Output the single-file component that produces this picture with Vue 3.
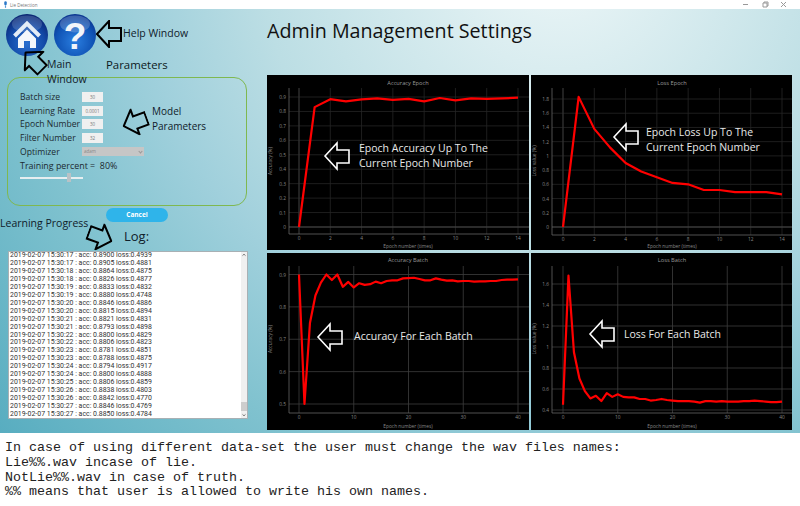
<template>
  <div class="app">
    <div class="titlebar">
      <svg class="app-icon" viewBox="0 0 6 8"><rect x="1.5" y="0" width="3" height="5" rx="1.5" fill="#2a78c8" /><rect x="2.3" y="5" width="1.4" height="3" fill="#5a9ad8" /></svg>
      <span class="app-name">Lie Detection</span>
      <div class="win-controls">
        <svg viewBox="0 0 50 9" width="50" height="9">
          <path d="M0 4.5h5" stroke="#999" fill="none" />
          <path d="M20 3h4v4h-4zM21 3V2h4v4h-1" stroke="#999" fill="none" />
          <path d="M38 2l5 5M43 2l-5 5" stroke="#999" fill="none" />
        </svg>
      </div>
    </div>

    <div class="main">
      <div class="left">
        <div class="top-icons">
          <svg class="orb" viewBox="0 0 42 42">
            <defs>
              <radialGradient id="homeOrb" cx="50%" cy="70%" r="70%">
                <stop offset="0" stop-color="#2a70d0" />
                <stop offset="0.6" stop-color="#124aa8" />
                <stop offset="1" stop-color="#0a2470" />
              </radialGradient>
            </defs>
            <circle cx="21" cy="21" r="21" fill="url(#homeOrb)" />
            <ellipse cx="21" cy="10" rx="15" ry="8.5" fill="#fff" opacity="0.16" />
            <path d="M8.5 22 21 9.5 33.5 22" fill="none" stroke="#e4ecf6" stroke-width="4" />
            <path d="M12 24.5 21 15.5 30 24.5V34H24V27H18V34H12Z" fill="#f4f7fb" />
          </svg>
          <svg class="orb" viewBox="0 0 42 42">
            <defs>
              <radialGradient id="helpOrb" cx="50%" cy="65%" r="70%">
                <stop offset="0" stop-color="#2a7ee0" />
                <stop offset="0.65" stop-color="#0f52b4" />
                <stop offset="1" stop-color="#0a2c84" />
              </radialGradient>
            </defs>
            <circle cx="21" cy="21" r="21" fill="url(#helpOrb)" />
            <ellipse cx="21" cy="10" rx="15" ry="8.5" fill="#fff" opacity="0.2" />
            <text x="21" y="35" class="orb-mark">?</text>
          </svg>
        </div>

        <div class="params-title">Parameters</div>

        <div class="params-panel">
          <div v-for="f in fields" :key="f.label" class="field">
            <span class="field-label">{{ f.label }}</span>
            <span class="field-input">{{ f.value }}</span>
          </div>
          <div class="field">
            <span class="field-label">Optimizer</span>
            <span class="field-select">adam<i class="caret"></i></span>
          </div>
          <div class="field">
            <span class="field-label wide">Training percent =&nbsp; 80%</span>
          </div>
          <div class="slider"><span class="slider-handle"></span></div>
        </div>

        <button class="cancel">Cancel</button>
        <div class="log-title">Log:</div>

        <div class="log-box">
          <div class="log-lines">
            <div v-for="(row, i) in logRows" :key="i" class="log-line">2019-02-07 15:30:{{ row[0] }} : acc: 0.{{ row[1] }} loss:0.{{ row[2] }}</div>
          </div>
          <div class="log-scroll">
            <svg viewBox="0 0 6 6" width="6" height="6"><path d="M1.5 3.6 3 2.2 4.5 3.6" fill="none" stroke="#777" /></svg>
            <div class="log-scroll-track"><span class="log-thumb"></span></div>
            <svg viewBox="0 0 6 6" width="6" height="6"><path d="M1.5 2.4 3 3.8 4.5 2.4" fill="none" stroke="#777" /></svg>
          </div>
        </div>

        <!-- hand drawn notes lying over the form -->
        <span class="note help-note">Help Window</span>
        <span class="note main-note">Main<br />Window</span>
        <span class="note model-note">Model<br />Parameters</span>
        <span class="note progress-note">Learning Progress</span>
        <svg
          v-for="a in blackArrows"
          :key="a.name"
          class="note-arrow"
          viewBox="0 0 26 28"
          :style="{ left: a.x + 'px', top: a.y + 'px', transform: 'rotate(' + a.r + 'deg)' }"
        >
          <polygon :points="arrowPoints" fill="none" stroke="#000" stroke-width="2" />
        </svg>
      </div>

      <div class="right">
        <h1 class="page-title">Admin Management Settings</h1>
        <div class="charts">
          <svg v-for="c in charts" :key="c.title" class="chart" :viewBox="'0 0 ' + c.w + ' ' + c.h" :style="{ height: c.h + 'px' }">
            <line v-for="t in c.xt" :key="'gx' + t.v" :x1="t.px" :x2="t.px" :y1="c.top" :y2="c.axisY" :stroke="c.grid" stroke-width="0.8" />
            <line v-for="t in c.yt" :key="'gy' + t.v" :x1="c.axisX" :x2="c.w" :y1="t.py" :y2="t.py" :stroke="c.grid" stroke-width="0.8" />
            <line v-if="c.zero" :x1="c.axisX" :x2="c.w" :y1="c.yt[0].py" :y2="c.yt[0].py" stroke="#555" stroke-width="0.8" />
            <line v-if="c.zero" :x1="c.xt[0].px" :x2="c.xt[0].px" :y1="c.top" :y2="c.axisY" stroke="#3c3c3c" stroke-width="0.8" />
            <line :x1="c.axisX" :x2="c.axisX" :y1="c.top" :y2="c.axisY" stroke="#666" stroke-width="0.8" />
            <line :x1="c.axisX" :x2="c.w" :y1="c.axisY" :y2="c.axisY" stroke="#666" stroke-width="0.8" />

            <text :x="c.titleX" :y="c.titleY" class="chart-title">{{ c.title }}</text>
            <text v-for="t in c.xt" :key="'tx' + t.v" :x="t.px" :y="c.axisY + 6" class="tick tick-x">{{ t.v }}</text>
            <text v-for="t in c.yt" :key="'ty' + t.v" :x="c.axisX - 3" :y="t.py + 2" class="tick tick-y">{{ t.v }}</text>
            <text :x="c.titleX" :y="c.h - 2" class="axis-label">Epoch number (times)</text>
            <text :transform="'translate(4.5 ' + c.labelY + ') rotate(-90)'" class="axis-label">{{ c.yLabel }}</text>

            <polyline :points="c.line" class="curve" />

            <polygon :points="arrowPoints" class="chart-arrow" :transform="'translate(' + c.arrow[0] + ' ' + c.arrow[1] + ')'" />
            <text v-for="(n, i) in c.note" :key="n" :x="c.noteX" :y="c.noteY + i * 15" class="chart-note">{{ n }}</text>
          </svg>
        </div>
      </div>
    </div>

    <div class="notes">
      <div>In case of using different data-set the user must change the wav files names:</div>
      <div>Lie%%.wav incase of lie.</div>
      <div>NotLie%%.wav in case of truth.</div>
      <div>%% means that user is allowed to write his own names.</div>
    </div>
  </div>
</template>

<script setup>
const fields = [
  { label: 'Batch size', value: '30' },
  { label: 'Learning Rate', value: '0.0001' },
  { label: 'Epoch Number', value: '30' },
  { label: 'Filter Number', value: '32' }
]

const logRows = [
  ['17', '8900', '4939'], ['17', '8905', '4881'], ['18', '8864', '4875'],
  ['18', '8826', '4877'], ['19', '8833', '4832'], ['19', '8880', '4748'],
  ['20', '8846', '4886'], ['20', '8815', '4894'], ['21', '8821', '4831'],
  ['21', '8793', '4898'], ['22', '8800', '4829'], ['22', '8806', '4823'],
  ['23', '8781', '4851'], ['23', '8788', '4875'], ['24', '8794', '4917'],
  ['24', '8800', '4888'], ['25', '8806', '4859'], ['26', '8838', '4803'],
  ['26', '8842', '4770'], ['27', '8846', '4769'], ['27', '8850', '4784']
]

const arrowPoints = '1,14 13,1 13,8 25,8 25,21 13,21 13,27'

// left/top are relative to the left column, which starts under the title bar
const blackArrows = [
  { name: 'help', x: 96, y: 11, r: 0 },
  { name: 'main', x: 21, y: 38, r: 45 },
  { name: 'model', x: 122, y: 99, r: -20 },
  { name: 'progress', x: 87, y: 214, r: 200 }
]

function buildChart(o) {
  const xPx = v => o.x0 + (v / o.xMax) * (o.x1 - o.x0)
  const yPx = v => o.y0 + ((v - o.yMin) / (o.yTop - o.yMin)) * (o.y1 - o.y0)
  const xt = []
  for (let v = 0; v <= o.xMax; v += o.xStep) xt.push({ v, px: xPx(v) })
  const yt = o.yTicks.map(v => ({ v, py: yPx(v) }))
  return {
    ...o,
    xt,
    yt,
    line: o.data.map((v, i) => xPx(i) + ',' + yPx(v)).join(' ')
  }
}

const charts = [
  buildChart({
    title: 'Accuracy Epoch', yLabel: 'Accuracy (%)', w: 262, h: 175, titleX: 141, titleY: 10, labelY: 86,
    x0: 32, x1: 251, xMax: 14, xStep: 2, y0: 152, y1: 22, yMin: 0, yTop: 0.9,
    yTicks: [0, 0.1, 0.2, 0.3, 0.4, 0.5, 0.6, 0.7, 0.8, 0.9],
    axisX: 22, axisY: 159, top: 13, grid: '#262626', zero: true,
    data: [0, 0.83, 0.885, 0.87, 0.883, 0.89, 0.88, 0.887, 0.87, 0.893, 0.877, 0.89, 0.887, 0.89, 0.895],
    arrow: [57, 67], note: ['Epoch Accuracy Up To The', 'Current Epoch Number'], noteX: 92, noteY: 77
  }),
  buildChart({
    title: 'Loss Epoch', yLabel: 'Loss value (%)', w: 261, h: 175, titleX: 141, titleY: 10, labelY: 86,
    x0: 32, x1: 251, xMax: 14, xStep: 2, y0: 152, y1: 24, yMin: 0, yTop: 1.8,
    yTicks: [0, 0.2, 0.4, 0.6, 0.8, 1, 1.2, 1.4, 1.6, 1.8],
    axisX: 21, axisY: 160, top: 13, grid: '#262626', zero: true,
    data: [0, 1.83, 1.38, 1.12, 0.9, 0.78, 0.7, 0.62, 0.6, 0.52, 0.52, 0.49, 0.49, 0.49, 0.46],
    arrow: [82, 48], note: ['Epoch Loss Up To The', 'Current Epoch Number'], noteX: 115, noteY: 61
  }),
  buildChart({
    title: 'Accuracy Batch', yLabel: 'Accuracy (%)', w: 262, h: 177, titleX: 141, titleY: 9, labelY: 86,
    x0: 32, x1: 251, xMax: 40, xStep: 10, y0: 151, y1: 21.5, yMin: 0.5, yTop: 0.9,
    yTicks: [0.5, 0.6, 0.7, 0.8, 0.9],
    axisX: 22, axisY: 160, top: 13, grid: '#3e3e3e', zero: false,
    data: [0.9, 0.5, 0.75, 0.835, 0.875, 0.9, 0.883, 0.9, 0.862, 0.877, 0.86, 0.873, 0.868, 0.87, 0.878, 0.873, 0.88, 0.882, 0.882, 0.888, 0.889, 0.89, 0.886, 0.882, 0.882, 0.888, 0.884, 0.881, 0.882, 0.879, 0.88, 0.88, 0.878, 0.879, 0.879, 0.88, 0.88, 0.883, 0.884, 0.884, 0.885],
    arrow: [50, 70], note: ['Accuracy For Each Batch'], noteX: 87, noteY: 87
  }),
  buildChart({
    title: 'Loss Batch', yLabel: 'Loss value (%)', w: 261, h: 177, titleX: 141, titleY: 9, labelY: 86,
    x0: 32, x1: 251, xMax: 40, xStep: 10, y0: 157, y1: 31, yMin: 0.4, yTop: 1.6,
    yTicks: [0.4, 0.6, 0.8, 1, 1.2, 1.4, 1.6],
    axisX: 21, axisY: 160, top: 13, grid: '#3e3e3e', zero: false,
    data: [0.45, 1.68, 0.95, 0.7, 0.58, 0.51, 0.535, 0.485, 0.56, 0.525, 0.55, 0.525, 0.52, 0.52, 0.505, 0.505, 0.49, 0.495, 0.505, 0.495, 0.49, 0.485, 0.485, 0.485, 0.48, 0.47, 0.485, 0.485, 0.48, 0.485, 0.48, 0.48, 0.48, 0.485, 0.485, 0.49, 0.485, 0.48, 0.475, 0.475, 0.48],
    arrow: [58, 67], note: ['Loss For Each Batch'], noteX: 93, noteY: 85
  })
]
</script>

<style scoped>
.app {
  width: 800px;
  height: 506px;
  overflow: hidden;
  display: flex;
  flex-direction: column;
  background: #fff;
  font-family: "Open Sans", "Noto Sans", sans-serif;
  color: #1c2a30;
}

.titlebar {
  height: 9px;
  flex: none;
  display: flex;
  align-items: center;
  padding-left: 3px;
  background: #fff;
}

.app-icon {
  width: 5px;
  height: 7px;
}

.app-name {
  margin-left: 2px;
  font-size: 4.5px;
  color: #777;
}

.win-controls {
  margin-left: auto;
  margin-right: 7px;
  display: flex;
}

.main {
  position: relative;
  height: 424px;
  flex: none;
  display: flex;
  background: radial-gradient(circle 800px at 560px -60px, #eaf5f6 0, #e4f2f4 60px, #c6e3e8 240px, #bcdee4 300px, #a0d0dc 420px, #80c2cf 550px, #58adc0 740px);
}

.left {
  position: relative;
  width: 267px;
  flex: none;
  display: flex;
  flex-direction: column;
}

.top-icons {
  display: flex;
  gap: 6px;
  padding: 5px 0 0 6px;
}

.orb {
  width: 42px;
  height: 42px;
}

.orb-mark {
  font-family: "Liberation Sans", sans-serif;
  font-weight: 700;
  font-size: 37px;
  fill: #f2f5fa;
  text-anchor: middle;
}

.params-title {
  margin: 1px 0 0 106px;
  font-size: 11.4px;
  line-height: 16px;
  height: 16px;
  color: #0c1a22;
}

.params-panel {
  box-sizing: border-box;
  width: 240px;
  height: 129px;
  margin: 4px 0 0 7px;
  padding: 12px 0 0 12px;
  border: 1.5px solid #7fb850;
  border-radius: 13px;
}

.field {
  display: flex;
  align-items: center;
  height: 13.7px;
}

.field-label {
  width: 62px;
  flex: none;
  font-size: 8.6px;
  white-space: nowrap;
}

.field-label.wide {
  width: auto;
  font-size: 8.9px;
}

.field-input {
  width: 21px;
  height: 10px;
  background: #f0f0f0;
  font-size: 4.5px;
  line-height: 10px;
  text-align: center;
  color: #777;
}

.field-select {
  position: relative;
  box-sizing: border-box;
  width: 62px;
  height: 9px;
  padding-left: 2px;
  background: #c6c6c6;
  font-size: 4.5px;
  line-height: 9px;
  color: #888;
}

.caret {
  position: absolute;
  right: 2px;
  top: 3px;
  width: 2px;
  height: 2px;
  border-right: 1px solid #999;
  border-bottom: 1px solid #999;
  transform: rotate(45deg);
}

.slider {
  position: relative;
  width: 63px;
  height: 2px;
  margin-top: 5px;
  background: #e6eef0;
}

.slider-handle {
  position: absolute;
  left: 47px;
  top: -4px;
  width: 4px;
  height: 9px;
  background: #b9c2c6;
}

.cancel {
  width: 62px;
  height: 14px;
  margin: 2px 0 0 106px;
  padding: 0;
  border: none;
  border-radius: 7px;
  background: #2fb4ea;
  color: #fff;
  font-family: inherit;
  font-size: 6.5px;
  font-weight: 700;
  line-height: 14px;
}

.log-title {
  margin: 5px 0 0 124px;
  font-size: 13px;
  line-height: 18px;
  height: 18px;
  color: #10202a;
}

.log-box {
  box-sizing: border-box;
  display: flex;
  width: 240px;
  height: 168px;
  margin: 6px 0 0 8px;
  background: #fff;
  border: 1px solid #a8b0b4;
}

.log-lines {
  flex: 1;
  padding: 0 0 0 1px;
  overflow: hidden;
}

.log-line {
  font-family: Roboto, "Open Sans", sans-serif;
  font-size: 6.95px;
  line-height: 7.95px;
  white-space: nowrap;
  color: #333;
}

.log-scroll {
  width: 6px;
  flex: none;
  display: flex;
  flex-direction: column;
  background: #f0f0f0;
}

.log-scroll-track {
  flex: 1;
  display: flex;
  flex-direction: column;
  justify-content: flex-end;
}

.log-thumb {
  height: 9px;
  margin-bottom: 1px;
  background: #cdcdcd;
}

.note {
  position: absolute;
  font-size: 10.5px;
  line-height: 15px;
  color: #10202a;
  white-space: nowrap;
}

.help-note {
  left: 123px;
  top: 17px;
}

.main-note {
  left: 47px;
  top: 48px;
}

.model-note {
  left: 152px;
  top: 95px;
  font-size: 10px;
}

.progress-note {
  left: 0;
  top: 207px;
}

.note-arrow {
  position: absolute;
  width: 26px;
  height: 28px;
}

.right {
  flex: 1;
  min-width: 0;
  display: flex;
  flex-direction: column;
}

.page-title {
  margin: 7px 0 0 0;
  height: 30px;
  font-size: 19.7px;
  line-height: 30px;
  font-weight: 400;
  color: #111;
}

.charts {
  display: grid;
  grid-template-columns: 262px 261px;
  column-gap: 2px;
  row-gap: 3px;
  margin-top: 29px;
}

.chart {
  display: block;
  width: 100%;
  background: #000;
}

.chart-title {
  font-size: 5.7px;
  fill: #999;
  text-anchor: middle;
}

.tick {
  font-size: 4.8px;
  fill: #888;
}

.tick-x {
  text-anchor: middle;
}

.tick-y {
  text-anchor: end;
}

.axis-label {
  font-size: 4.8px;
  fill: #888;
  text-anchor: middle;
}

.curve {
  fill: none;
  stroke: #f00;
  stroke-width: 2.2;
  stroke-linejoin: round;
}

.chart-arrow {
  fill: none;
  stroke: #fff;
  stroke-width: 1.6;
}

.chart-note {
  font-size: 10.5px;
  fill: #e8e8e8;
}

.notes {
  padding: 8px 0 0 5px;
  font-family: "Liberation Mono", "Courier New", monospace;
  font-size: 13.33px;
  line-height: 14.8px;
  color: #222;
}
</style>
